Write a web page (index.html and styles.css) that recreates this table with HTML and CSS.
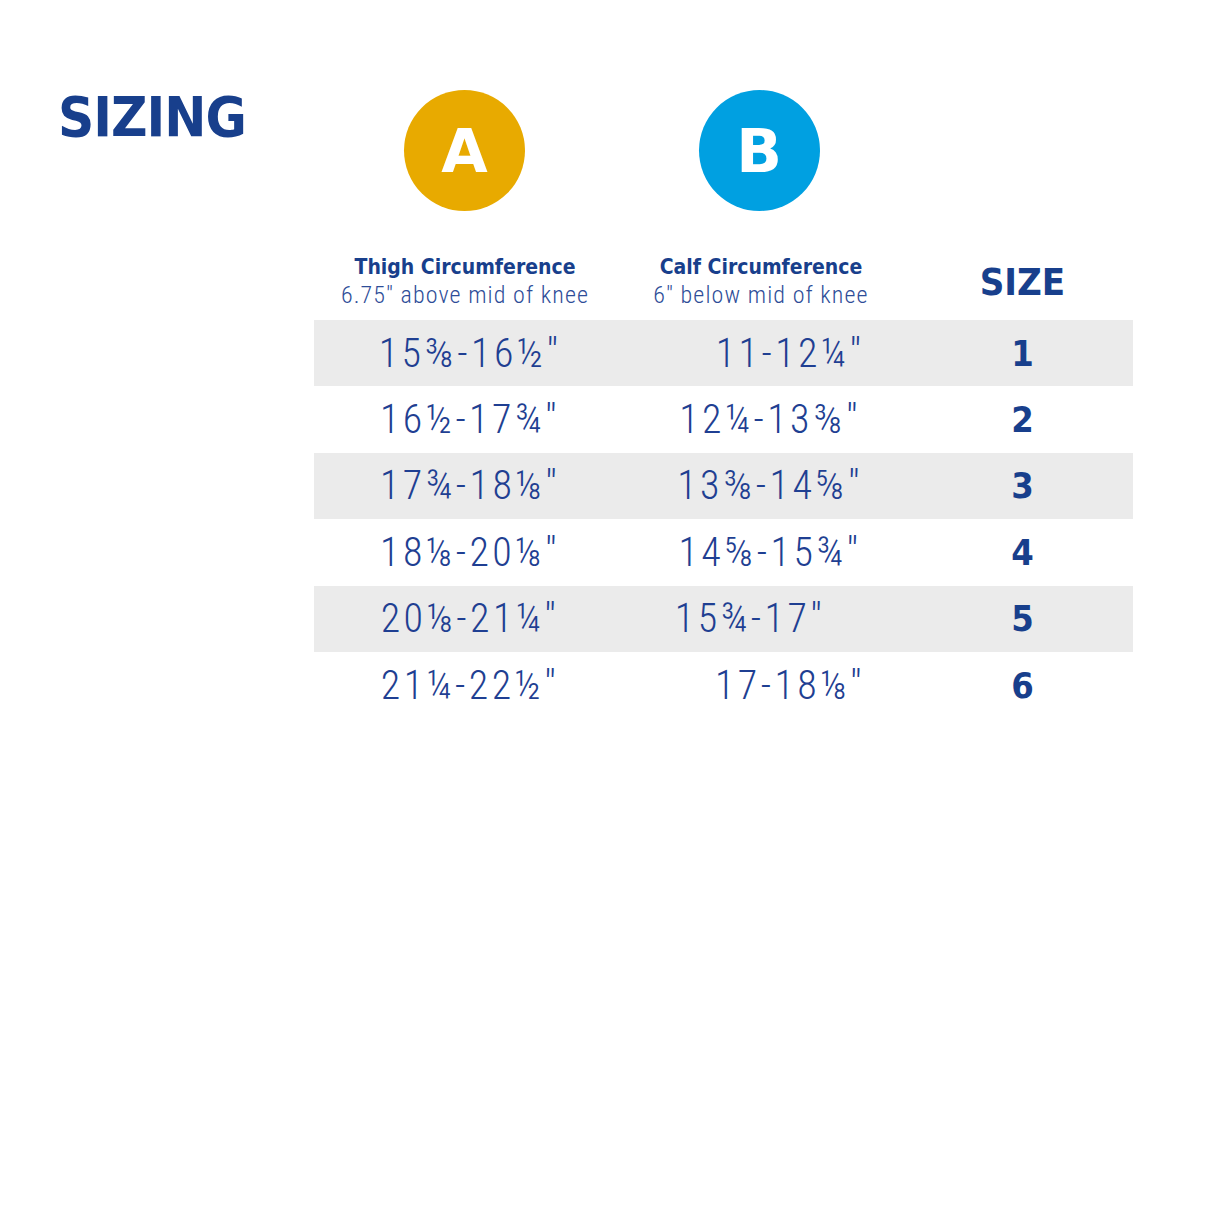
FILE: index.html
```html
<!DOCTYPE html>
<html>
<head>
<meta charset="utf-8">
<link rel="stylesheet" href="styles.css">
</head>
<body>
<div class="page">
  <div class="side">
    <h1 class="title">SIZING</h1>
  </div>
  <div class="main">
    <div class="grid badges">
      <div class="cell"><div class="badge badge-a">A</div></div>
      <div class="cell"><div class="badge badge-b">B</div></div>
      <div class="cell"></div>
    </div>
    <div class="grid head">
      <div class="cell col">
        <div class="h-title">Thigh Circumference</div>
        <div class="h-sub">6.75" above mid of knee</div>
      </div>
      <div class="cell col">
        <div class="h-title">Calf Circumference</div>
        <div class="h-sub">6" below mid of knee</div>
      </div>
      <div class="cell"><div class="h-size">SIZE</div></div>
    </div>
    <div class="rows">
      <div class="grid row shade"><div class="cell v v1">15⅜-16½"</div><div class="cell v v2 r1">11-12¼"</div><div class="cell s">1</div></div>
      <div class="grid row"><div class="cell v v1">16½-17¾"</div><div class="cell v v2">12¼-13⅜"</div><div class="cell s">2</div></div>
      <div class="grid row shade"><div class="cell v v1">17¾-18⅛"</div><div class="cell v v2">13⅜-14⅝"</div><div class="cell s">3</div></div>
      <div class="grid row"><div class="cell v v1">18⅛-20⅛"</div><div class="cell v v2">14⅝-15¾"</div><div class="cell s">4</div></div>
      <div class="grid row shade"><div class="cell v v1">20⅛-21¼"</div><div class="cell v v2 r5">15¾-17"</div><div class="cell s">5</div></div>
      <div class="grid row"><div class="cell v v1">21¼-22½"</div><div class="cell v v2 r6">17-18⅛"</div><div class="cell s">6</div></div>
    </div>
  </div>
</div>
</body>
</html>
```

FILE: styles.css
```css
html, body {
  margin: 0;
  padding: 0;
  background: #ffffff;
}
body {
  font-family: "Roboto Condensed", "DejaVu Sans Condensed", sans-serif;
  color: #1f3f92;
}
.page {
  display: flex;
  width: 1214px;
  height: 1214px;
}
.side {
  width: 314px;
  flex: none;
  padding-left: 58px;
  box-sizing: border-box;
}
.title {
  margin: 84px 0 0 0;
  font-family: "DejaVu Sans Condensed", sans-serif;
  font-weight: bold;
  font-size: 56px;
  letter-spacing: -1px;
  color: #183f8c;
  line-height: 66px;
}
.main {
  width: 819px;
  flex: none;
  padding-top: 90px;
}
.grid {
  display: grid;
  grid-template-columns: 302px 290px 227px;
}
.cell {
  display: flex;
  align-items: center;
  justify-content: center;
}
.badge {
  width: 121px;
  height: 121px;
  border-radius: 50%;
  display: flex;
  align-items: center;
  justify-content: center;
  color: #fff;
  font-family: "DejaVu Sans", sans-serif;
  font-weight: bold;
  font-size: 60px;
}
.badge-a { background: #e8aa00; margin-left: -1px; }
.badge-b { background: #00a0e1; margin-left: -4px; }
.head {
  margin-top: 42px;
  height: 67px;
}
.col {
  flex-direction: column;
  justify-content: flex-start;
}
.h-title {
  font-family: "DejaVu Sans Condensed", sans-serif;
  font-weight: bold;
  font-size: 21px;
  line-height: 28px;
  color: #183f8c;
}
.h-sub {
  font-family: "Roboto Condensed", sans-serif;
  font-weight: 300;
  font-size: 24px;
  line-height: 28px;
  letter-spacing: 1.1px;
  color: #2e4d98;
}
.h-size {
  font-family: "DejaVu Sans Condensed", sans-serif;
  font-weight: bold;
  font-size: 38px;
  color: #183f8c;
  margin-top: -10px;
  margin-left: 6px;
}
.rows {
  display: flex;
  flex-direction: column;
}
.row {
  height: 66.4px;
}
.shade {
  background: #ebebeb;
}
.v {
  font-size: 40px;
  font-weight: 300;
  letter-spacing: 3.4px;
  color: #1f3f92;
}
.v1 { padding-left: 10px; }
.v2 { padding-left: 18px; }
.r1, .r6 { padding-left: 58px; }
.r5 { padding-left: 0; padding-right: 22px; }
.s {
  font-family: "DejaVu Sans Condensed", sans-serif;
  font-weight: bold;
  font-size: 36px;
  color: #183f8c;
  padding-left: 6px;
}
```
